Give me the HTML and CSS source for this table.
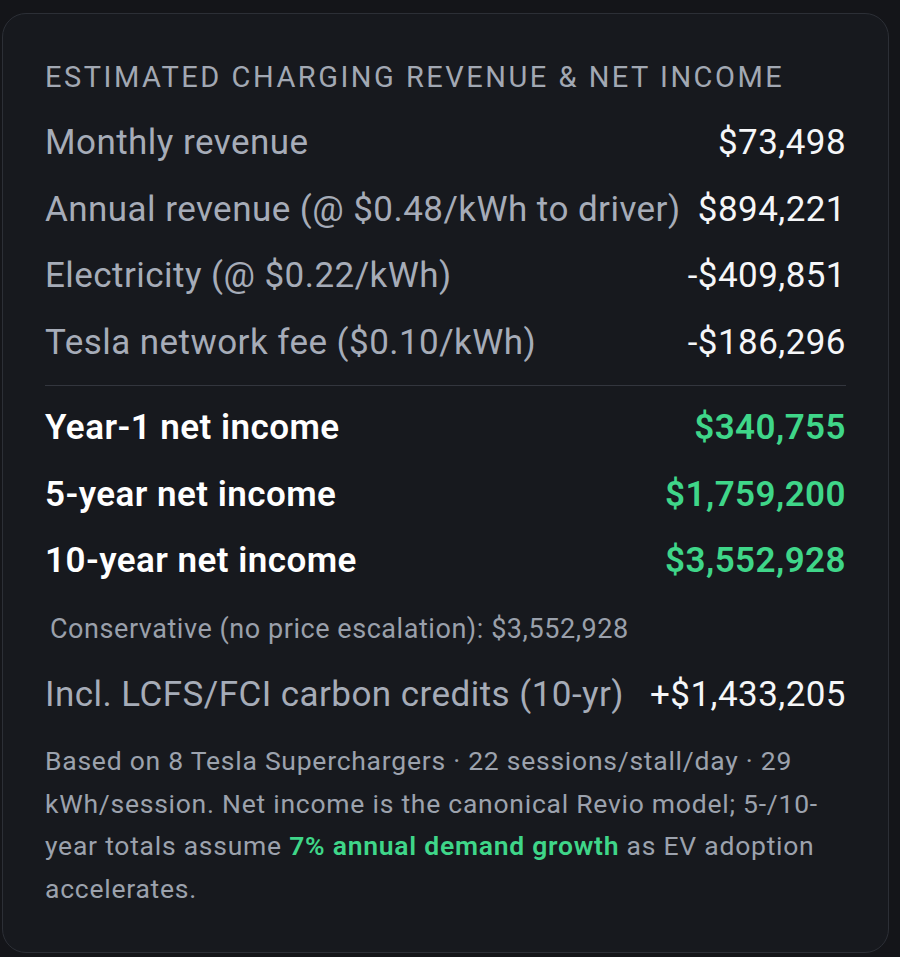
FILE: index.html
```html
<!DOCTYPE html>
<html lang="en">
<head>
<meta charset="utf-8">
<title>Estimated charging revenue</title>
<link rel="stylesheet" href="styles.css">
</head>
<body>
<section class="card">
  <h2 class="title">ESTIMATED CHARGING REVENUE &amp; NET INCOME</h2>
  <div class="rows">
    <div class="row"><span class="label">Monthly revenue</span><span class="value">$73,498</span></div>
    <div class="row"><span class="label">Annual revenue (@ $0.48/kWh to driver)</span><span class="value">$894,221</span></div>
    <div class="row"><span class="label">Electricity (@ $0.22/kWh)</span><span class="value">-$409,851</span></div>
    <div class="row"><span class="label">Tesla network fee ($0.10/kWh)</span><span class="value">-$186,296</span></div>
  </div>
  <hr class="sep">
  <div class="rows">
    <div class="row strong"><span class="label">Year-1 net income</span><span class="value green">$340,755</span></div>
    <div class="row strong"><span class="label">5-year net income</span><span class="value green">$1,759,200</span></div>
    <div class="row strong"><span class="label">10-year net income</span><span class="value green">$3,552,928</span></div>
  </div>
  <p class="note">Conservative (no price escalation): $3,552,928</p>
  <div class="row credits"><span class="label">Incl. LCFS/FCI carbon credits (10-yr)</span><span class="value">+$1,433,205</span></div>
  <p class="foot">Based on 8 Tesla Superchargers · 22 sessions/stall/day · 29 kWh/session. Net income is the canonical Revio model; 5-/10-year totals assume <span class="hl">7% annual demand growth</span> as EV adoption accelerates.</p>
</section>
</body>
</html>
```

FILE: styles.css
```css
html, body {
  margin: 0;
  padding: 0;
  background: #141519;
}
body {
  font-family: Roboto, "Noto Sans", sans-serif;
  padding: 13px 11px 5px 2px;
}
.card {
  box-sizing: border-box;
  width: 887px;
  height: 940px;
  background: #17191e;
  border: 1px solid #2c2f36;
  border-radius: 24px;
  padding: 46px 42px 40px 42px;
}
.title {
  margin: 0 0 15px 0;
  font-size: 29px;
  line-height: 35px;
  font-weight: 400;
  letter-spacing: 2.5px;
  color: #a2a8b3;
}
.rows {
  display: flex;
  flex-direction: column;
}
.row {
  display: flex;
  justify-content: space-between;
  align-items: baseline;
  font-size: 35px;
  line-height: 66.5px;
  letter-spacing: 0.45px;
}
.label {
  color: #a6acb8;
}
.value {
  color: #f5f6f8;
}
.strong {
  font-weight: 600;
}
.strong .label {
  color: #ffffff;
}
.green {
  color: #3fd689;
}
.sep {
  margin: 9px 0;
  border: 0;
  border-top: 1px solid #33363e;
  height: 0;
}
.note {
  margin: 16px 0 0 0;
  padding-left: 5px;
  font-size: 27px;
  line-height: 36px;
  letter-spacing: 0.55px;
  color: #9aa0ab;
}
.credits {
  margin-top: 15px;
}
.foot {
  margin: 12px 0 0 0;
  font-size: 26.5px;
  line-height: 42.5px;
  letter-spacing: 0.75px;
  color: #9ca2ad;
}
.hl {
  color: #3fd689;
  font-weight: 600;
}
```
